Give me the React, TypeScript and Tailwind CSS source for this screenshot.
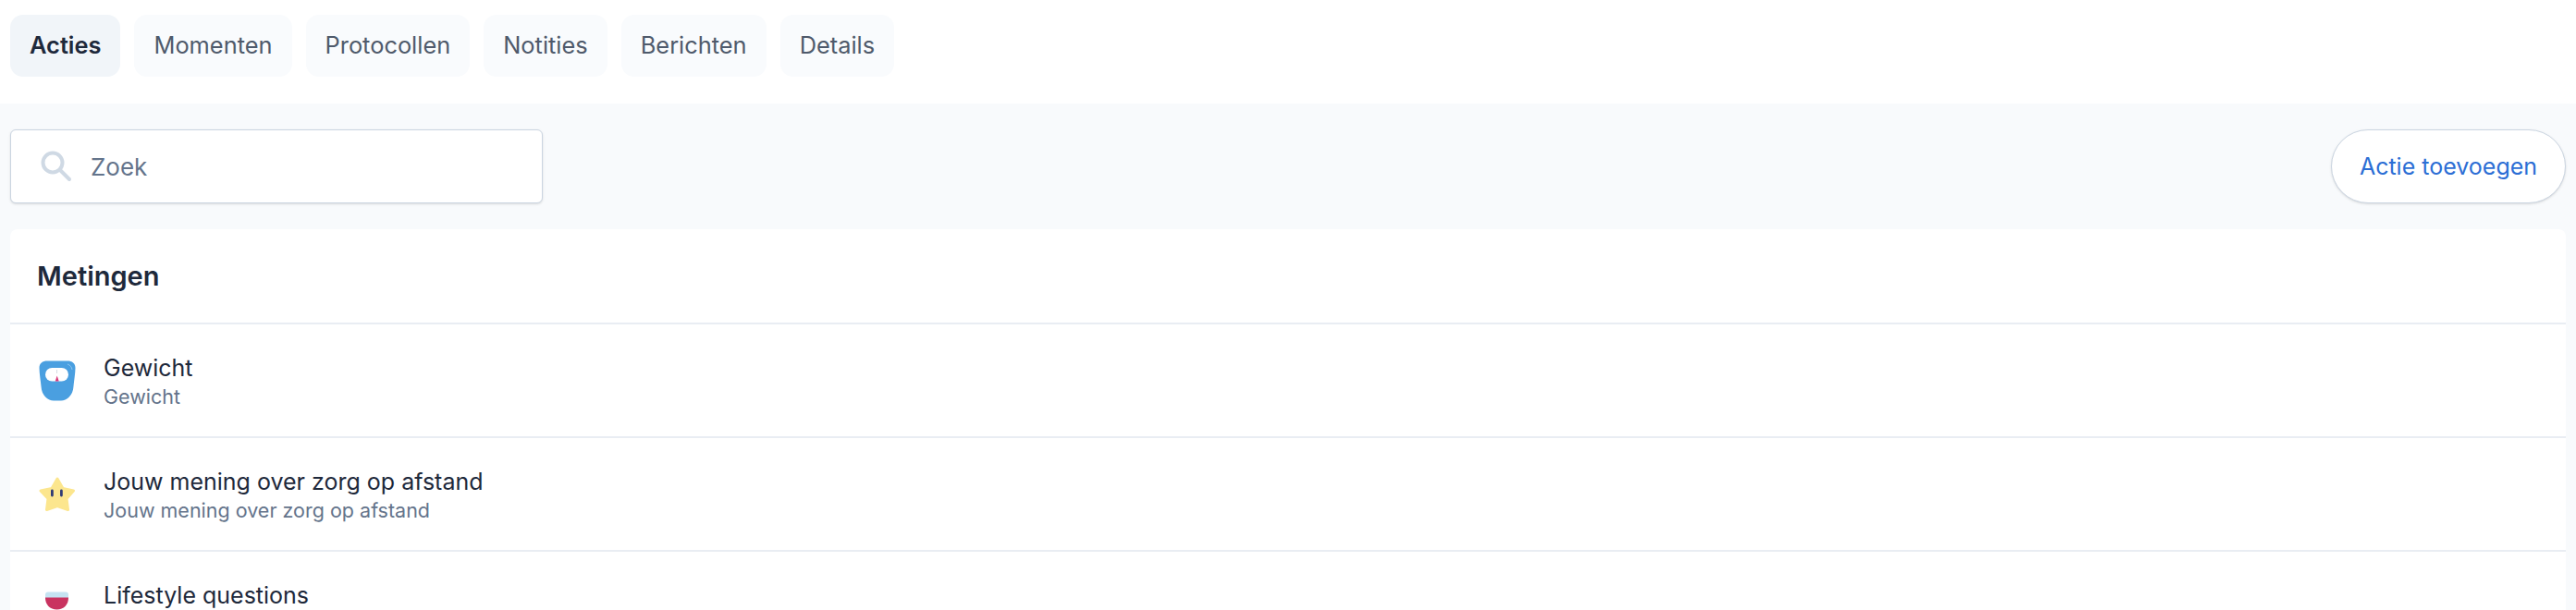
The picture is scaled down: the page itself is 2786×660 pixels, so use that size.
import React from 'react';

const TABS = ['Acties', 'Momenten', 'Protocollen', 'Notities', 'Berichten', 'Details'];

const ScaleIcon = () => (
  <svg width="40" height="44" viewBox="0 0 40 44">
    <path d="M0.500 8C0.500 3 4 0.500 9 0.500h22c5 0 8.500 2.500 8.500 7.500 0 6-1.500 14-2 20C37 38 30 43.500 24 43.500h-8C10 43.500 3 38 2.500 28 2 22 0.500 14 0.500 8z" fill="#4a9fe0" />
    <path d="M31 4c3 1 4.500 3 5 6" stroke="#8cc4ee" strokeWidth="1" fill="none" />
    <rect x="7" y="8" width="25" height="14.500" rx="7.250" fill="#ffffff" />
    <path d="M19.500 10v4" stroke="#d5dbe2" strokeWidth="1" />
    <path d="M19.700 16.500l2 6h-4z" fill="#d9387a" />
  </svg>
);

const StarIcon = () => (
  <svg width="40" height="44" viewBox="0 0 40 44">
    <path
      d="M20 5l6 10.500 11.500 2.500-7.500 8.500 1.500 12L20 34.500 8.500 38.500l1.500-12L2 18l12-2.500z"
      fill="#fce68e"
      stroke="#fce68e"
      strokeWidth="3"
      strokeLinejoin="round"
    />
    <rect x="13" y="16.500" width="2.800" height="8" rx="1.400" fill="#2f3b75" />
    <rect x="23" y="16.500" width="2.800" height="8" rx="1.400" fill="#2f3b75" />
  </svg>
);

const GlassIcon = () => (
  <svg width="40" height="44" viewBox="0 0 40 44">
    <path d="M7 7.500c0-2 1-3 3-3h19c2 0 3 1 3 3V11H7z" fill="#c5e3f2" />
    <path d="M7 10.500h25V11c0 7-5 12.500-12.500 12.500S7 18 7 11z" fill="#c93360" />
  </svg>
);

const ROWS = [
  { title: 'Gewicht', sub: 'Gewicht', icon: <ScaleIcon /> },
  { title: 'Jouw mening over zorg op afstand', sub: 'Jouw mening over zorg op afstand', icon: <StarIcon /> },
  { title: 'Lifestyle questions', sub: '', icon: <GlassIcon /> },
];

const App: React.FC = () => {
  return (
    <div className="h-[660px] overflow-hidden bg-white font-['Inter',sans-serif]">
      <div className="flex h-[112px] gap-[15px] pl-[11px] pt-4">
        {TABS.map((tab, i) => (
          <button
            key={tab}
            className={`h-[67px] rounded-[14px] px-[21px] text-[25.400px] ${i === 0 ? 'bg-[#f1f5f9] font-semibold text-[#1e293b]' : 'bg-[#f9fbfd] text-[#4f5a6b]'}`}
          >
            {tab}
          </button>
        ))}
      </div>

      <div className="bg-[#f8fafc] pl-[11px] pr-[11px] pt-7">
        <div className="flex items-center justify-between">
          <div className="flex h-[80px] w-[576px] items-center rounded-[6px] border border-[#cbd5e1] bg-white pl-[32px] shadow-sm">
            <svg width="34" height="34" viewBox="0 0 34 34" fill="none" stroke="#cfd9e4" strokeWidth="4" strokeLinecap="round">
              <circle cx="13" cy="13" r="10.500" />
              <path d="M21 21l10 10" />
            </svg>
            <span className="ml-[20px] text-[26px] text-[#64748b]">Zoek</span>
          </div>
          <button className="h-[80px] w-[254px] rounded-full border border-[#cbd5e1] bg-white pt-px text-[25px] text-[#2c6ed5] shadow-sm">
            Actie toevoegen
          </button>
        </div>

        <div className="mt-7 rounded-t-[8px] bg-white">
          <div className="flex h-[103px] items-center border-b-2 border-[#e9edf3] pl-[29px] text-[29px] font-semibold text-[#1e293b]">
            Metingen
          </div>
          {ROWS.map((row) => (
            <div key={row.title} className="flex h-[123px] items-center border-b-2 border-[#e9edf3] pl-[31px]">
              {row.icon}
              <div className="ml-[30px]">
                <div className="text-[25px] leading-[35px] text-[#1e293b]">{row.title}</div>
                <div className="h-[26px] text-[21.500px] leading-[26px] text-[#64748b]">{row.sub}</div>
              </div>
            </div>
          ))}
        </div>
      </div>
    </div>
  );
};

export default App;
